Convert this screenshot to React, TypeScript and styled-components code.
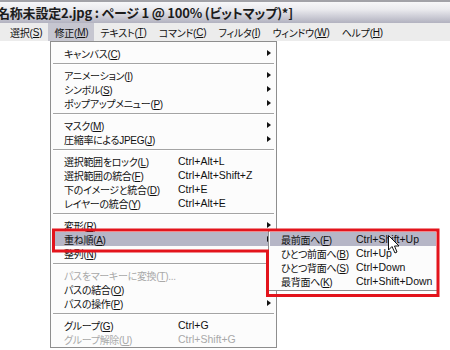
import styled, { createGlobalStyle } from "styled-components";

const GlobalStyle = createGlobalStyle`
  html, body {
    margin: 0;
    padding: 0;
    background: #ffffff;
  }
`;

const Page = styled.main`
  position: relative;
  width: 450px;
  height: 350px;
  overflow: hidden;

  display: flex;
  flex-direction: column;

  background-color: #ffffff;
  font-family: "Liberation Sans", "Noto Sans CJK JP", sans-serif;
  font-feature-settings: "palt";
  color: #111111;
`;

const TitleBar = styled.header`
  height: 21px;

  display: flex;
  align-items: center;

  border-top: 2px solid #a2a2a8;
  background: linear-gradient(to bottom, #f7f7f9 0%, #ebebef 35%, #b2b2c0 100%);
  overflow: hidden;
  white-space: nowrap;

  h1 {
    margin: 0 0 0 -3px;
    font-family: "Noto Sans CJK JP", sans-serif;
    font-size: 13px;
    font-weight: 700;
    color: #1c1c1c;
    letter-spacing: -0.2px;
  }
`;

const MenuBar = styled.nav`
  height: 18px;

  display: flex;
  align-items: stretch;

  padding-left: 4px;
  background-color: #ececec;
`;

const BarItem = styled.span<{ $open?: boolean }>`
  display: flex;
  align-items: center;

  padding: 0 6px;
  font-size: 10px;
  letter-spacing: -0.2px;
  background-color: ${(p) => (p.$open ? "#c6c6d0" : "transparent")};
`;

const Body = styled.section`
  position: relative;
  flex-grow: 1;
`;

const Menu = styled.div`
  width: 221px;
  margin-left: 50px;
  padding: 4px 2px 1px;

  border: 1px solid #8e8e8e;
  background-color: #fcfcfc;
`;

const SubMenu = styled.div`
  position: absolute;
  left: 268px;
  top: 188px;
  width: 166px;
  padding: 2px 1px;

  border: 1px solid #8e8e8e;
  background-color: #fcfcfc;
`;

const Row = styled.div<{ $active?: boolean; $disabled?: boolean; $labelWidth: number }>`
  height: 14px;

  display: flex;
  align-items: center;

  padding: 0 3px 0 11px;
  white-space: nowrap;
  color: ${(p) => (p.$disabled ? "#a9a9a9" : "#111111")};
  background-color: ${(p) => (p.$active ? "#b6b6c6" : "transparent")};

  span.label {
    width: ${(p) => p.$labelWidth}px;
    font-size: 10px;
    letter-spacing: -0.3px;
  }
  span.keys {
    flex-grow: 1;
    font-size: 10.5px;
  }
`;

const Arrow = styled.i`
  width: 0;
  height: 0;
  margin-left: auto;

  border-top: 3.5px solid transparent;
  border-bottom: 3.5px solid transparent;
  border-left: 4px solid #111111;
`;

const Separator = styled.hr`
  height: 0;
  margin: 3px 0;

  border: none;
  border-top: 1px solid #a4a4a4;
  border-bottom: 1px solid #ffffff;
`;

const Overlay = styled.svg`
  position: absolute;
  left: 0;
  top: 0;
  pointer-events: none;
`;

type Item =
  | { sep: true }
  | {
      sep?: false;
      label: string;
      key: string;
      keys?: string;
      sub?: boolean;
      disabled?: boolean;
      active?: boolean;
      tail?: string;
    };

const menuItems: Item[] = [
  { label: "キャンバス", key: "C", sub: true },
  { sep: true },
  { label: "アニメーション", key: "I", sub: true },
  { label: "シンボル", key: "S", sub: true },
  { label: "ポップアップメニュー", key: "P", sub: true },
  { sep: true },
  { label: "マスク", key: "M", sub: true },
  { label: "圧縮率によるJPEG", key: "J", sub: true },
  { sep: true },
  { label: "選択範囲をロック", key: "L", keys: "Ctrl+Alt+L" },
  { label: "選択範囲の統合", key: "F", keys: "Ctrl+Alt+Shift+Z" },
  { label: "下のイメージと統合", key: "D", keys: "Ctrl+E" },
  { label: "レイヤーの統合", key: "Y", keys: "Ctrl+Alt+E" },
  { sep: true },
  { label: "変形", key: "R", sub: true },
  { label: "重ね順", key: "A", sub: true, active: true },
  { label: "整列", key: "N", sub: true },
  { sep: true },
  { label: "パスをマーキーに変換", key: "T", disabled: true, tail: "..." },
  { label: "パスの結合", key: "O", sub: true },
  { label: "パスの操作", key: "P", sub: true },
  { sep: true },
  { label: "グループ", key: "G", keys: "Ctrl+G" },
  { label: "グループ解除", key: "U", keys: "Ctrl+Shift+G", disabled: true },
];

const orderItems = [
  { label: "最前面へ", key: "F", keys: "Ctrl+Shift+Up", active: true },
  { label: "ひとつ前面へ", key: "B", keys: "Ctrl+Up" },
  { label: "ひとつ背面へ", key: "S", keys: "Ctrl+Down" },
  { label: "最背面へ", key: "K", keys: "Ctrl+Shift+Down" },
];

const menus = [
  ["選択", "S"],
  ["修正", "M"],
  ["テキスト", "T"],
  ["コマンド", "C"],
  ["フィルタ", "I"],
  ["ウィンドウ", "W"],
  ["ヘルプ", "H"],
];

const App = () => {
  return (
    <>
      <GlobalStyle />
      <Page>
        <TitleBar>
          <h1>名称未設定2.jpg : ページ 1 @ 100% (ビットマップ)*]</h1>
        </TitleBar>
        <MenuBar>
          {menus.map(([name, key]) => (
            <BarItem key={name} $open={key === "M"}>
              {name}(<u>{key}</u>)
            </BarItem>
          ))}
        </MenuBar>
        <Body>
          <Menu>
            {menuItems.map((item, i) =>
              item.sep ? (
                <Separator key={i} />
              ) : (
                <Row
                  key={i}
                  $labelWidth={114}
                  $active={item.active}
                  $disabled={item.disabled}
                >
                  <span className="label">
                    {item.label}(<u>{item.key}</u>){item.tail}
                  </span>
                  {item.keys && <span className="keys">{item.keys}</span>}
                  {item.sub && <Arrow />}
                </Row>
              )
            )}
          </Menu>
          <SubMenu>
            {orderItems.map((item) => (
              <Row key={item.key} $labelWidth={75} $active={item.active}>
                <span className="label">
                  {item.label}(<u>{item.key}</u>)
                </span>
                <span className="keys">{item.keys}</span>
              </Row>
            ))}
          </SubMenu>
        </Body>
        {/* 赤枠の注釈とマウスカーソル */}
        <Overlay width="450" height="350" viewBox="0 0 450 350">
          <path
            d="M53.5 230 H438 V295.5 H267.5 V251 H53.5 Z"
            fill="none"
            stroke="#e3141c"
            strokeWidth="3"
          />
          <path
            d="M388.5 235.5 V250 L392 246.5 L395 253 L397 252 L394.5 246 H399 Z"
            fill="#ffffff"
            stroke="#111111"
            strokeWidth="1"
            strokeLinejoin="round"
          />
        </Overlay>
      </Page>
    </>
  );
};

export default App;
